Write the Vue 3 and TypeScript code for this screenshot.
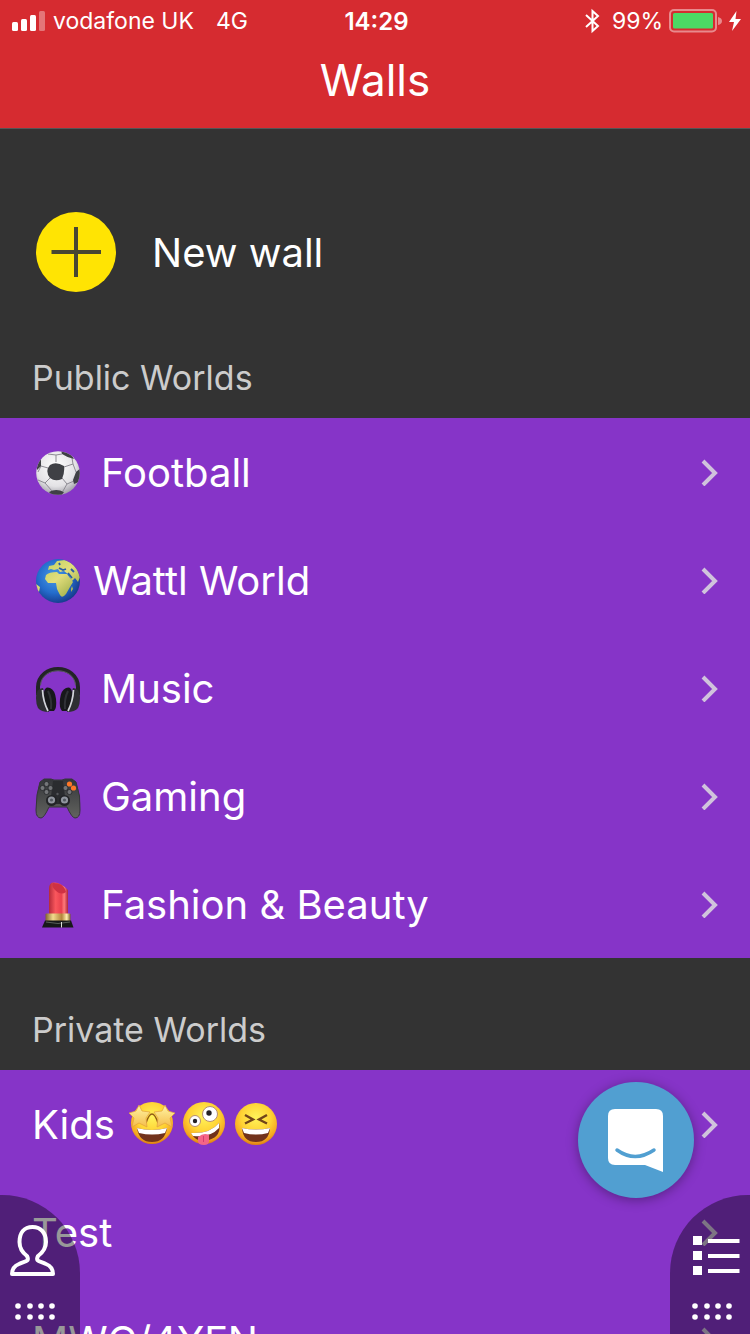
<script setup lang="ts">
interface World {
  name: string
  icon?: string
  tight?: boolean
  faces?: boolean
}

const publicWorlds: World[] = [
  { name: 'Football', icon: 'football' },
  { name: 'Wattl World', icon: 'globe', tight: true },
  { name: 'Music', icon: 'headphones' },
  { name: 'Gaming', icon: 'gamepad' },
  { name: 'Fashion & Beauty', icon: 'lipstick' },
]

const privateWorlds: World[] = [
  { name: 'Kids', faces: true },
  { name: 'Test' },
  { name: 'MWC/4YFN' },
]

const dotColumns = [3, 15, 26, 37]
</script>

<template>
  <div class="screen">
    <header class="top">
      <div class="status">
        <div class="status-left">
          <svg class="signal" width="33" height="20" viewBox="0 0 33 20" fill="#fff" aria-hidden="true">
            <rect x="0" y="11" width="6" height="9" rx="1.5" />
            <rect x="9" y="8" width="6" height="12" rx="1.5" />
            <rect x="18" y="4" width="6" height="16" rx="1.5" />
            <rect x="27" y="0" width="6" height="20" rx="1.5" opacity=".35" />
          </svg>
          <span>vodafone UK</span>
          <span class="network">4G</span>
        </div>
        <time class="clock">14:29</time>
        <div class="status-right">
          <svg width="16" height="26" viewBox="0 0 16 26" fill="none" stroke="#fff" stroke-width="2" aria-hidden="true">
            <path d="M2 7 L14 18 L8.500 23 V3 L14 8 L2 19" />
          </svg>
          <span class="percent">99%</span>
          <svg width="54" height="24" viewBox="0 0 54 24" aria-hidden="true">
            <rect x="1" y="1" width="46" height="21.500" rx="4" fill="none" stroke="#fff" stroke-opacity=".45" stroke-width="2" />
            <rect x="4" y="4" width="40" height="15.500" rx="1.500" fill="#4cd964" />
            <path d="M49 8 Q53 9 53 12 T49 16 Z" fill="#fff" fill-opacity=".45" />
          </svg>
          <svg width="12" height="20" viewBox="0 0 12 20" fill="#fff" aria-hidden="true">
            <path d="M7.500 0 L0 11 H5 L3 20 L12 8 H6.500 Z" />
          </svg>
        </div>
      </div>
      <h1>Walls</h1>
    </header>

    <main class="content">
      <button class="new-wall" type="button">
        <svg width="80" height="80" viewBox="0 0 80 80" aria-hidden="true">
          <circle cx="40" cy="40" r="40" fill="#ffe403" />
          <path d="M40 15 V65 M15.500 40 H65" stroke="#484733" stroke-width="4" />
        </svg>
        <span>New wall</span>
      </button>

      <h2>Public Worlds</h2>
      <nav class="list" aria-label="Public Worlds">
        <a v-for="world in publicWorlds" :key="world.name" class="row" href="#">
          <svg v-if="world.icon === 'football'" class="icon" viewBox="0 0 46 46" aria-hidden="true">
            <defs>
              <radialGradient id="ball" cx=".45" cy=".35" r=".65">
                <stop offset="0" stop-color="#fff" />
                <stop offset=".7" stop-color="#e3e2e5" />
                <stop offset="1" stop-color="#a4a2aa" />
              </radialGradient>
              <clipPath id="ball-clip"><circle cx="23" cy="23" r="21.800" /></clipPath>
            </defs>
            <circle cx="23" cy="23" r="21.800" fill="url(#ball)" />
            <g clip-path="url(#ball-clip)">
              <path d="M21 12 L21 5 M29 17 L38 14 M27 28 L32 34 M15 28 L10 33 M13 18 L6 16 M21 5 L13 4 M21 5 L27 4 M38 14 L37 8 M38 14 L41 22 M32 34 L39 31 M32 34 L28 41 M10 33 L17 41 M10 33 L3 30 M6 16 L3 22" fill="none" stroke="#8d8b93" stroke-width="1" />
              <path d="M15 15 Q21 11 29 16 Q30 22 27 29 Q20 32 15 28 Q11 23 13 18 Z M26 0 L36 4 L39 9 Q33 8 27 4 Z M46 18 L41 22 L38 30 L39 34 L46 31 Z M14 42 Q21 38 29 42 L26 46 H17 Z M0 11 L6 9 L6 16 L2 20 Z" fill="#3f4045" />
            </g>
          </svg>
          <svg v-else-if="world.icon === 'globe'" class="icon" viewBox="0 0 46 46" aria-hidden="true">
            <defs>
              <radialGradient id="sea" cx=".42" cy=".4" r=".62">
                <stop offset="0" stop-color="#4a9be6" />
                <stop offset=".6" stop-color="#246ccc" />
                <stop offset="1" stop-color="#173b8c" />
              </radialGradient>
              <linearGradient id="land" x2="1" y2="1">
                <stop offset="0" stop-color="#b5cf58" />
                <stop offset=".5" stop-color="#e2dd7c" />
                <stop offset="1" stop-color="#8aa23b" />
              </linearGradient>
              <clipPath id="globe-clip"><circle cx="23" cy="23" r="22" /></clipPath>
            </defs>
            <circle cx="23" cy="23" r="22" fill="url(#sea)" />
            <g clip-path="url(#globe-clip)">
              <path d="M11 17 Q14 14 22 14 L24 16 L32 16 L35 20 L38 24 L35 29 L31 36 Q27 41 25 37 L22 31 L21 25 L13 25 L10 21 Z M13 12 L14 8 L19 7 L22 3 L30 2 Q42 5 45 19 L43 24 L40 20 L37 23 L34 17 L29 13 L25 14 L23 11 L19 12 L16 11 Z M1 26 L5 29 L4 34 L1 33 Z M36 31 L37 28 L38 31 L36 34 Z" fill="url(#land)" />
              <path d="M24 10 L28 12 L31 11 M33 15 L37 20 M36 11 L39 14 M24 5 L25 7" stroke="#275da7" stroke-width="1.800" fill="none" />
            </g>
          </svg>
          <svg v-else-if="world.icon === 'headphones'" class="icon" viewBox="0 0 46 46" aria-hidden="true">
            <path d="M3 29 V21 C4 -3 42 -3 43 21 V29" fill="none" stroke="#232427" stroke-width="4" />
            <path d="M5.500 19 C7 0 39 0 40.500 19" fill="none" stroke="#55575c" stroke-width="1" />
            <g v-for="side in ['left', 'right']" :key="side" :class="{ mirrored: side === 'right' }">
              <path d="M1 32 Q1 22 8 22 L14 46 Q6 46 3 42 Q1 38 1 32 Z" fill="#2e2f33" />
              <path d="M9 26 Q10 20 15 22 Q20 24 21 33 Q22 42 19 45 H13 Q9 36 9 26 Z" fill="#17181b" />
              <path d="M7.500 24 Q8 35 13 45" fill="none" stroke="#d2d4da" stroke-width="1.700" />
              <path d="M13 25 Q17 33 16 43" fill="none" stroke="#303237" stroke-width="2" />
            </g>
          </svg>
          <svg v-else-if="world.icon === 'gamepad'" class="icon" viewBox="0 0 46 46" aria-hidden="true">
            <defs>
              <linearGradient id="pad" x2="0" y2="1">
                <stop offset="0" stop-color="#34363a" />
                <stop offset="1" stop-color="#62635f" />
              </linearGradient>
            </defs>
            <g class="lowered">
              <path d="M5 6 L9 3 H16 L19 4 H27 L30 3 H37 L41 6 Q46 20 45 34 Q45 42 40 42 Q37 42 32 31 H14 Q9 42 6 42 Q1 42 1 34 Q1 18 5 6 Z" fill="url(#pad)" stroke="#35363a" />
              <path d="M18 5 H28 L31 28 H15 Z" fill="#2a2c2f" />
              <g fill="#737578" stroke="#252629" stroke-width=".8">
                <circle cx="11.500" cy="8" r="2.500" /><circle cx="7.500" cy="12" r="2.500" /><circle cx="15.500" cy="12" r="2.500" /><circle cx="11.500" cy="16" r="2.500" />
                <circle cx="30.500" cy="12" r="2.500" /><circle cx="34.500" cy="16" r="2.500" />
              </g>
              <circle cx="34.500" cy="8" r="2.600" fill="#ff7727" />
              <circle cx="38.500" cy="12" r="2.600" fill="#ff7727" />
              <circle cx="16.500" cy="24.500" r="5.500" fill="#232427" /><circle cx="29.500" cy="24.500" r="5.500" fill="#232427" />
              <circle cx="16.500" cy="24" r="3.600" fill="#91969f" /><circle cx="29.500" cy="24" r="3.600" fill="#91969f" />
              <circle cx="16.500" cy="24" r="1.600" fill="#545a62" /><circle cx="29.500" cy="24" r="1.600" fill="#545a62" />
              <circle cx="22.500" cy="18" r="1.200" fill="#55575b" />
            </g>
          </svg>
          <svg v-else class="icon" viewBox="0 0 46 46" aria-hidden="true">
            <defs>
              <linearGradient id="stick"><stop offset="0" stop-color="#b52b3a" /><stop offset=".35" stop-color="#fa575d" /><stop offset=".65" stop-color="#e9414e" /><stop offset=".8" stop-color="#ff7b7b" /><stop offset="1" stop-color="#ad2539" /></linearGradient>
              <linearGradient id="gold"><stop offset="0" stop-color="#806330" /><stop offset=".3" stop-color="#f2da8c" /><stop offset=".65" stop-color="#b4853b" /><stop offset=".85" stop-color="#fff0ad" /><stop offset="1" stop-color="#7a5c2a" /></linearGradient>
            </defs>
            <path d="M14 33 V7 Q14 1 18 .5 Q25 -.5 33 8 V33 Z" fill="url(#stick)" />
            <path d="M18 1 Q29 1 31 10 Q26 14 20 8 Q16 4 18 1 Z" fill="#cf3143" />
            <rect x="10.500" y="31.500" width="25" height="8" rx="1" fill="url(#gold)" />
            <path d="M10 38.500 H36 L38.500 45.500 H7 Z" fill="#17191a" />
            <path d="M11 40 Q23 43 35 40" stroke="#59605a" fill="none" />
            <path d="M26.500 40 V45.500" stroke="#dce1dc" stroke-width="1" />
          </svg>
          <span class="label" :class="{ tight: world.tight }">{{ world.name }}</span>
          <svg class="chevron" viewBox="0 0 18 28" aria-hidden="true"><path d="M3 3 L15 15 L3 27" /></svg>
        </a>
      </nav>

      <h2>Private Worlds</h2>
      <nav class="list" aria-label="Private Worlds">
        <a v-for="world in privateWorlds" :key="world.name" class="row" href="#">
          <span>{{ world.name }}</span>
          <span v-if="world.faces" class="faces">
            <svg class="icon" viewBox="0 0 46 46" aria-hidden="true">
              <defs>
                <radialGradient id="face" cx=".5" cy=".35" r=".65">
                  <stop offset="0" stop-color="#fff35b" />
                  <stop offset=".55" stop-color="#ffd334" />
                  <stop offset=".85" stop-color="#f5a820" />
                  <stop offset="1" stop-color="#dc7e14" />
                </radialGradient>
                <linearGradient id="star" x2="0" y2="1"><stop offset="0" stop-color="#fff5a5" /><stop offset="1" stop-color="#f5bd4c" /></linearGradient>
              </defs>
              <circle cx="23" cy="22" r="21" fill="url(#face)" />
              <path d="M17 22 Q23 4 29 22" fill="none" stroke="#925a17" stroke-width="1.500" />
              <path d="M10 4 L13 10 L21 11 L17 17 L18 26 L10 22 L3 26 L5 17 L0 12 L7 10 Z M36 4 L39 10 L46 12 L41 17 L43 26 L36 22 L28 26 L29 17 L25 11 L33 10 Z" fill="url(#star)" stroke="#e2a03c" stroke-width=".7" />
              <path d="M8 27 Q23 31 38 27 Q36 41 23 41 Q10 41 8 27 Z" fill="#72321b" />
              <path d="M8 27 Q23 31 38 27 L36 32 Q23 35 10 32 Z" fill="#fff" />
            </svg>
            <svg class="icon" viewBox="0 0 46 46" aria-hidden="true">
              <circle cx="23" cy="22" r="21" fill="url(#face)" />
              <circle cx="14" cy="20" r="5.500" fill="#fff" stroke="#b78e70" />
              <circle cx="29" cy="13" r="7.500" fill="#fff" stroke="#b78e70" />
              <circle cx="14" cy="20" r="2.200" fill="#242126" /><circle cx="28" cy="12" r="2.700" fill="#242126" />
              <path d="M10 32 Q29 33 38 22 Q41 35 28 39 Q16 43 10 32 Z" fill="#70311b" />
              <path d="M10 32 Q29 33 38 22 L38 27 Q29 37 12 35 Z" fill="#fff" />
              <path d="M17 36 Q23 31 28 34 V40 Q28 44 23 44 Q17 44 17 40 Z" fill="#f56587" />
              <path d="M22.500 35 V41" stroke="#d53e70" />
            </svg>
            <svg class="icon" viewBox="0 0 46 46" aria-hidden="true">
              <circle cx="23" cy="23" r="21" fill="url(#face)" />
              <path d="M12 14 L20 18.500 L12 22.500 M34 14 L26 18.500 L34 22.500" stroke="#71441a" stroke-width="2.400" fill="none" />
              <path d="M9 27 Q23 30 37 27 Q36 41 23 41 Q10 41 9 27 Z" fill="#72321b" />
              <path d="M9 27 Q23 30 37 27 L35 32 Q23 35 11 32 Z" fill="#fff" />
            </svg>
          </span>
          <svg class="chevron" viewBox="0 0 18 28" aria-hidden="true"><path d="M3 3 L15 15 L3 27" /></svg>
        </a>
      </nav>
    </main>

    <button class="chat" type="button" aria-label="Open chat">
      <svg width="56" height="64" viewBox="0 0 56 64" aria-hidden="true">
        <path d="M7 1 H48 Q55 1 55 8 V64 L37 57 H7 Q0 57 0 50 V8 Q0 1 7 1 Z" fill="#fff" />
        <path d="M9 42 Q27 55 46 42" fill="none" stroke="#519fd1" stroke-width="3.500" stroke-linecap="round" />
      </svg>
    </button>

    <button class="tab tab-left" type="button" aria-label="Profile">
      <svg width="46" height="52" viewBox="0 0 46 52" fill="none" stroke="#fff" stroke-width="4" stroke-linejoin="round" aria-hidden="true">
        <path d="M22.500 3 C14 3 9.500 9 9.500 18 C9.500 25 13 29 17 32 C20 38 15 37 9 40 C4 42 2 45 2 50 H43 C43 45 41 42 36 40 C30 37 25 38 28 32 C32 29 36 25 36 18 C36 9 31 3 22.500 3 Z" />
      </svg>
      <svg class="dots" width="42" height="18" viewBox="0 0 42 18" fill="#fff" aria-hidden="true">
        <template v-for="x in dotColumns" :key="x">
          <circle :cx="x" cy="3" r="2.8" /><circle :cx="x" cy="14" r="2.8" />
        </template>
      </svg>
    </button>
    <button class="tab tab-right" type="button" aria-label="Walls list">
      <svg width="48" height="52" viewBox="0 0 48 52" fill="#fff" aria-hidden="true">
        <path d="M1 12 H10 V21 H1 Z M1 27 H10 V36 H1 Z M1 42 H10 V51 H1 Z M16 15 H47.500 V19 H16 Z M16 30 H47.500 V34 H16 Z M16 45 H47.500 V49 H16 Z" />
      </svg>
      <svg class="dots" width="42" height="18" viewBox="0 0 42 18" fill="#fff" aria-hidden="true">
        <template v-for="x in dotColumns" :key="x">
          <circle :cx="x" cy="3" r="2.8" /><circle :cx="x" cy="14" r="2.8" />
        </template>
      </svg>
    </button>
  </div>
</template>

<style>
body {
  margin: 0;
  background: #333;
}
</style>

<style scoped>
.screen {
  display: flex;
  flex-direction: column;
  height: 100vh;
  overflow: hidden;
  background: #333;
  color: #fff;
  font-family: Inter, "Liberation Sans", sans-serif;
  font-size: 40px;
}
.screen svg {
  display: block;
  flex: none;
}
.top {
  flex: none;
  background: #d62b30;
  border-bottom: 1px solid #555;
}
.status {
  display: grid;
  grid-template-columns: 1fr auto 1fr;
  align-items: center;
  height: 42px;
  padding: 0 9px 0 12px;
  font-size: 23px;
}
.status-left,
.status-right {
  display: flex;
  align-items: center;
}
.status-left {
  gap: 8px;
}
.network {
  margin-left: 14px;
}
.clock {
  font-size: 24px;
  font-weight: 600;
}
.status-right {
  justify-content: flex-end;
  gap: 6px;
}
.percent {
  margin-left: 6px;
}
h1 {
  margin: 0;
  padding: 4px 0 14px;
  font-size: 44px;
  font-weight: 400;
  line-height: 68px;
  text-align: center;
}
.content {
  flex: 1;
  min-height: 0;
  overflow-y: auto;
  scrollbar-width: none;
}
.new-wall {
  display: flex;
  align-items: center;
  gap: 36px;
  width: 100%;
  padding: 83px 36px 46px;
  border: 0;
  background: none;
  color: inherit;
  font: inherit;
}
h2 {
  margin: 0;
  padding: 16px 32px;
  color: #ccc;
  font-size: 34px;
  font-weight: 400;
  line-height: 48px;
}
.list + h2 {
  padding-top: 48px;
}
.list {
  background: #8634c8;
}
.row {
  display: flex;
  align-items: center;
  height: 108px;
  padding: 0 32px;
  color: #fff;
  text-decoration: none;
}
.icon {
  width: 46px;
  height: 46px;
}
.row > .icon {
  margin-top: 2px;
  margin-left: 3px;
}
.mirrored {
  transform: translateX(46px) scaleX(-1);
}
.lowered {
  transform: translateY(2px);
}
.label {
  margin-left: 20px;
}
.label.tight {
  margin-left: 12px;
}
.faces {
  display: flex;
  gap: 6px;
  margin-left: 14px;
}
.chevron {
  width: 18px;
  height: 28px;
  margin-left: auto;
  fill: none;
  stroke: #d0c3dc;
  stroke-width: 4;
}
.chat {
  position: fixed;
  right: 56px;
  bottom: 136px;
  display: grid;
  place-items: center;
  width: 116px;
  height: 116px;
  padding: 0;
  border: 0;
  border-radius: 50%;
  background: #519fd1;
  box-shadow: 0 2px 12px rgba(0, 0, 0, 0.35);
}
.tab {
  position: fixed;
  bottom: 0;
  display: flex;
  flex-direction: column;
  justify-content: flex-end;
  gap: 27px;
  box-sizing: border-box;
  width: 80px;
  height: 139px;
  padding: 0 10px 13px;
  border: 0;
  background: rgba(0, 0, 0, 0.4);
}
.tab-left {
  left: 0;
  border-top-right-radius: 78px;
}
.tab-right {
  right: 0;
  padding-left: 22px;
  border-top-left-radius: 78px;
}
.tab-left .dots {
  margin-left: 5px;
}
</style>
